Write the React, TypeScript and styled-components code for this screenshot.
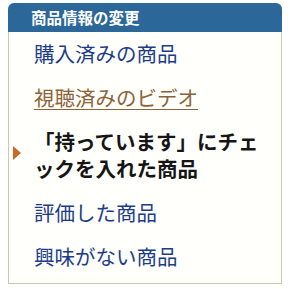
import React from "react";
import styled, { createGlobalStyle } from "styled-components";

const Global = createGlobalStyle`
  html, body { margin: 0; padding: 0; background: #ffffff; }
  body { font-family: "Noto Sans CJK JP", "Noto Sans", sans-serif; }
`;

const Page = styled.div`
  padding: 3px 0 0 8px;
`;

const Panel = styled.div`
  width: 274px;
  box-sizing: border-box;
`;

const Header = styled.div`
  height: 29px;
  background: #2c679a;
  border-radius: 6px 6px 0 0;
  color: #ffffff;
  font-weight: 700;
  font-size: 15.5px;
  line-height: 29px;
  padding-left: 23px;
`;

const List = styled.ul`
  list-style: none;
  margin: 0;
  padding: 0 0 4px 0;
  background: #fffffb;
  border: 1px solid #c9c9b3;
  border-top: none;
`;

const Item = styled.li<{ $active?: boolean }>`
  position: relative;
  padding: 8px 10px 9px 25px;
  font-size: 20.5px;
  line-height: 27px;
  ${(p) =>
    p.$active &&
    `
    &::before {
      content: "";
      position: absolute;
      left: 4px;
      top: 50%;
      margin-top: -10px;
      border-left: 8px solid #c8692a;
      border-top: 7px solid transparent;
      border-bottom: 7px solid transparent;
    }
  `}
`;

const Link = styled.a<{ $visited?: boolean }>`
  color: ${(p) => (p.$visited ? "#8c6238" : "#1c3c8a")};
  text-decoration: ${(p) => (p.$visited ? "underline" : "none")};
  text-underline-offset: 3px;
  text-decoration-thickness: 1px;
`;

const Current = styled.span`
  color: #151515;
  font-weight: 700;
`;

export default function App() {
  return (
    <Page>
      <Global />
      <Panel>
        <Header>商品情報の変更</Header>
        <List>
          <Item>
            <Link href="#">購入済みの商品</Link>
          </Item>
          <Item>
            <Link href="#" $visited>
              視聴済みのビデオ
            </Link>
          </Item>
          <Item $active>
            <Current>「持っています」にチェックを入れた商品</Current>
          </Item>
          <Item>
            <Link href="#">評価した商品</Link>
          </Item>
          <Item>
            <Link href="#">興味がない商品</Link>
          </Item>
        </List>
      </Panel>
    </Page>
  );
}
